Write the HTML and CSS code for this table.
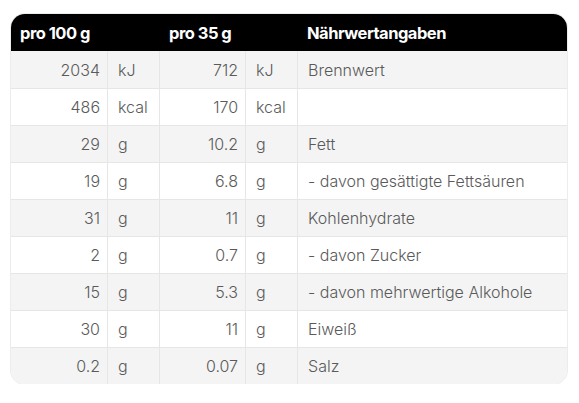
FILE: index.html
```html
<!DOCTYPE html>
<html lang="de">
<head>
<meta charset="utf-8">
<link rel="stylesheet" href="styles.css">
</head>
<body>
<div class="wrap">
<table class="nt">
  <colgroup>
    <col class="c1"><col class="c2"><col class="c3"><col class="c4"><col class="c5">
  </colgroup>
  <thead>
    <tr><th colspan="2">pro 100 g</th><th colspan="2">pro 35 g</th><th>Nährwertangaben</th></tr>
  </thead>
  <tbody>
    <tr><td class="num">2034</td><td>kJ</td><td class="num">712</td><td>kJ</td><td class="name">Brennwert</td></tr>
    <tr><td class="num">486</td><td>kcal</td><td class="num">170</td><td>kcal</td><td class="name"></td></tr>
    <tr><td class="num">29</td><td>g</td><td class="num">10.2</td><td>g</td><td class="name">Fett</td></tr>
    <tr><td class="num">19</td><td>g</td><td class="num">6.8</td><td>g</td><td class="name">- davon gesättigte Fettsäuren</td></tr>
    <tr><td class="num">31</td><td>g</td><td class="num">11</td><td>g</td><td class="name">Kohlenhydrate</td></tr>
    <tr><td class="num">2</td><td>g</td><td class="num">0.7</td><td>g</td><td class="name">- davon Zucker</td></tr>
    <tr><td class="num">15</td><td>g</td><td class="num">5.3</td><td>g</td><td class="name">- davon mehrwertige Alkohole</td></tr>
    <tr><td class="num">30</td><td>g</td><td class="num">11</td><td>g</td><td class="name">Eiweiß</td></tr>
    <tr><td class="num">0.2</td><td>g</td><td class="num">0.07</td><td>g</td><td class="name">Salz</td></tr>
  </tbody>
</table>
</div>
</body>
</html>
```
FILE: styles.css
```css
html, body { margin: 0; padding: 0; background: #fff; }
.wrap { padding: 14px 12px 0 11px; }
.nt {
  width: 556px;
  border-collapse: separate;
  border-spacing: 0;
  table-layout: fixed;
  font-family: Inter, "Noto Sans", sans-serif;
  font-size: 16px;
  font-weight: 300;
  color: #5a5a5a;
  border-radius: 14px;
  overflow: hidden;
  box-shadow: 0 0 0 1px #ececec;
}
.c1 { width: 97px; }
.c2 { width: 52px; }
.c3 { width: 86px; }
.c4 { width: 52px; }
.c5 { width: auto; }
.nt th {
  background: #000;
  color: #fff;
  font-weight: 700;
  text-align: left;
  height: 37px;
  padding: 0 9px;
  font-size: 16.5px;
  letter-spacing: -0.5px;
  box-sizing: border-box;
}
.nt td {
  height: 37px;
  box-sizing: border-box;
  padding: 0 10px;
  border-right: 1px solid #e6e6e6;
  border-top: 1px solid #e6e6e6;
  white-space: nowrap;
}
.nt td:last-child { border-right: none; }
.nt tbody tr:first-child td { border-top: none; }
.nt td.num { text-align: right; padding-right: 7px; }
.nt tbody tr:nth-child(odd) td { background: #f4f4f4; }
.nt tbody tr:nth-child(even) td { background: #fff; }
```
